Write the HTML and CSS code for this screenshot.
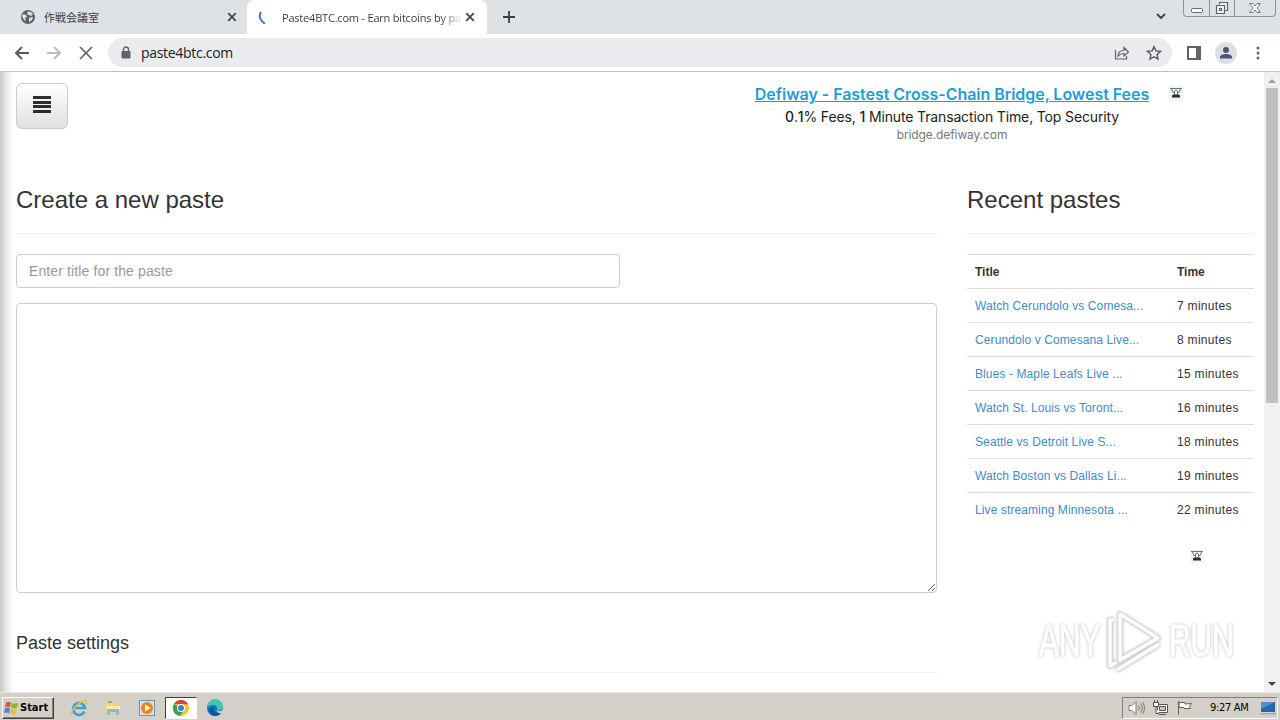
FILE: index.html
```
<!DOCTYPE html>
<html lang="en">
<head>
    <meta charset="UTF-8">
    <meta name="viewport" content="width=device-width, initial-scale=1.0">
    <title>Paste4BTC.com - Earn bitcoins by pasting</title>
    <link rel="stylesheet" href="styles.css">
</head>
<body>
    <div class="tabs">
        <div class="tab">
            <svg class="favicon" width="14" height="14" viewBox="0 0 14 14"><circle cx="7" cy="7" r="7" fill="#5f6368"/><path d="M2 4l3 1 1 2-2 1 1 3-2-1-2-4zM7 1.500l3 .5 2 2-2 2-2-1-2-1zM8 8l3-1 1 1-2 3-2 1z" fill="#dee1e6"/></svg>
            <span class="tab-title cjk">作戦会議室</span>
            <svg class="tab-close" width="10" height="10" viewBox="0 0 10 10"><path d="M1.200 1.200l7.600 7.600M8.800 1.200l-7.600 7.600" stroke="#45484c" stroke-width="1.800"/></svg>
        </div>
        <div class="tab active">
            <svg class="favicon" width="14" height="14" viewBox="0 0 14 14"><path d="M3 2C0.500 6 2 11 7 13.500" fill="none" stroke="#3b6fd0" stroke-width="1.900"/></svg>
            <span class="tab-title">Paste4BTC.com - Earn bitcoins by pa</span>
            <svg class="tab-close" width="10" height="10" viewBox="0 0 10 10"><path d="M1.200 1.200l7.600 7.600M8.800 1.200l-7.600 7.600" stroke="#45484c" stroke-width="1.800"/></svg>
        </div>
        <svg class="new-tab" width="12" height="12" viewBox="0 0 12 12"><path d="M6 0v12M0 6h12" stroke="#3c4043" stroke-width="1.800"/></svg>
        <svg class="tab-search" width="10" height="7" viewBox="0 0 10 7"><path d="M1 1l4 4 4-4" fill="none" stroke="#3c4043" stroke-width="1.800"/></svg>
        <div class="window-buttons">
            <span><svg width="12" height="16" viewBox="0 0 12 16"><rect x=".5" y="8.500" width="11" height="4" rx="1" fill="#fff" stroke="#666b73"/></svg></span>
            <span><svg width="14" height="16" viewBox="0 0 14 16"><path d="M4.500 4.500v-2h8v8h-2M1.500 5.500h8v8h-8zM4.500 8.500h2v2h-2z" fill="#f2f3f5" stroke="#5c6169" stroke-width="1.200"/></svg></span>
            <span><svg width="12" height="16" viewBox="0 0 12 16"><path d="M.5 3.500h3.500l2 2.500 2-2.500h3.500l-3.500 4.500 3.500 4.500h-3.500l-2-2.500-2 2.500H.5L4 8z" fill="#fff" stroke="#777c84"/></svg></span>
        </div>
    </div>

    <div class="toolbar">
        <svg width="16" height="14" viewBox="0 0 16 14"><path d="M15 7H2M8 1L2 7l6 6" fill="none" stroke="#55585c" stroke-width="1.900"/></svg>
        <svg width="16" height="14" viewBox="0 0 16 14"><path d="M1 7h13M8 1l6 6-6 6" fill="none" stroke="#b9bbbe" stroke-width="1.900"/></svg>
        <svg class="stop" width="14" height="14" viewBox="0 0 14 14"><path d="M1 1l12 12M13 1L1 13" stroke="#5f6368" stroke-width="1.700"/></svg>
        <div class="address">
            <svg width="10" height="13" viewBox="0 0 10 13"><path d="M2.500 6V3.500a2.500 2.500 0 0 1 5 0V6" fill="none" stroke="#5f6368" stroke-width="1.400"/><rect x=".5" y="5" width="9" height="7.500" rx="1" fill="#5f6368"/></svg>
            <span class="url">paste4btc.com</span>
            <svg width="16" height="14" viewBox="0 0 16 14"><path d="M1.500 4v9h11v-3M4 10c0-3.500 2-5.500 6-5.500V1.500L14.500 6 10 10V7.500C7 7.500 5.500 8.300 4 10z" fill="none" stroke="#5f6368" stroke-width="1.200"/></svg>
            <svg class="star" width="16" height="16" viewBox="0 0 16 16"><path d="M8 1.700l1.900 4.200 4.600.5-3.400 3.100.9 4.500-4-2.300L4 14l.9-4.500L1.500 6.400l4.600-.5z" fill="none" stroke="#55585c" stroke-width="1.400"/></svg>
        </div>
        <svg class="side-panel" width="14" height="14" viewBox="0 0 14 14"><path d="M1 1h12v12H1z" fill="none" stroke="#5f6368" stroke-width="2"/><path d="M9 1h4v12H9z" fill="#5f6368"/></svg>
        <svg class="profile" width="22" height="22" viewBox="0 0 22 22"><circle cx="11" cy="11" r="11" fill="#dcdfe3"/><circle cx="11" cy="8" r="3" fill="#4a5673"/><path d="M5 16.500v-1.500c0-2 3-3 6-3s6 1 6 3v1.500z" fill="#4a5673"/></svg>
        <svg class="menu-dots" width="4" height="14" viewBox="0 0 4 14" fill="#5f6368"><circle cx="2" cy="2" r="1.500"/><circle cx="2" cy="7" r="1.500"/><circle cx="2" cy="12" r="1.500"/></svg>
    </div>

    <div class="viewport">
        <div class="page">
            <header>
                <button class="menu-button"><svg width="18" height="17" viewBox="0 0 18 17"><path d="M0 1.500h18M0 6.500h18M0 10.500h18M0 15.500h18" stroke="#2e2a30" stroke-width="3"/></svg></button>
                <div class="ad">
                    <a href="#">Defiway - Fastest Cross-Chain Bridge, Lowest Fees</a>
                    <p><b>0</b>.<b>1</b>% Fees, <b>1</b> Minute Transaction Time, Top Security</p>
                    <small>bridge.defiway.com</small>
                </div>
                <svg class="ad-mark" width="14" height="14" viewBox="0 0 14 14"><rect width="14" height="14" fill="#eef3f6"/><path d="M1 2.500h12M2.500 3l1.500 3.500h2M11.500 3L10 6.500H8M5.500 9V5L7 4l1.500 1v4" fill="none" stroke="#6a747b"/><path d="M3 11.500V9.500l1.500-1h5l1.500 1v2z" fill="#242c33"/></svg>
            </header>
            <main>
                <section>
                    <h2>Create a new paste</h2>
                    <input type="text" class="paste-title" placeholder="Enter title for the paste">
                    <textarea class="paste-text"></textarea>
                    <h4>Paste settings</h4>
                </section>
                <aside>
                    <h2>Recent pastes</h2>
                    <table>
                        <tr><th>Title</th><th>Time</th></tr>
                        <tr><td><a href="#">Watch Cerundolo vs Comesa...</a></td><td>7 minutes</td></tr>
                        <tr><td><a href="#">Cerundolo v Comesana Live...</a></td><td>8 minutes</td></tr>
                        <tr><td><a href="#">Blues - Maple Leafs Live ...</a></td><td>15 minutes</td></tr>
                        <tr><td><a href="#">Watch St. Louis vs Toront...</a></td><td>16 minutes</td></tr>
                        <tr><td><a href="#">Seattle vs Detroit Live S...</a></td><td>18 minutes</td></tr>
                        <tr><td><a href="#">Watch Boston vs Dallas Li...</a></td><td>19 minutes</td></tr>
                        <tr><td><a href="#">Live streaming Minnesota ...</a></td><td>22 minutes</td></tr>
                    </table>
                    <svg class="side-mark" width="14" height="14" viewBox="0 0 14 14"><rect width="14" height="14" fill="#f3f6f8"/><path d="M1 2.500h12M2.500 3l1.500 3.500h2M11.500 3L10 6.500H8M5.500 9V5L7 4l1.500 1v4" fill="none" stroke="#6a747b"/><path d="M3 11.500V9.500l1.500-1h5l1.500 1v2z" fill="#242c33"/></svg>
                </aside>
            </main>
        </div>
        <div class="scrollbar">
            <svg width="8" height="4" viewBox="0 0 8 4"><path d="M0 4l4-4 4 4z" fill="#a0a0a0"/></svg>
            <div class="thumb"></div>
            <svg class="down" width="8" height="4" viewBox="0 0 8 4"><path d="M0 0l4 4 4-4z" fill="#444"/></svg>
        </div>
        <div class="watermark">
            <span class="any">ANY</span>
            <svg width="58" height="66" viewBox="0 0 58 66" fill="none" stroke-linejoin="round"><g stroke="#d9d9d9" stroke-width="5.500"><path d="M14 6l38 24-38 22zM8 12H4v46l7-4M11 62l42-26"/></g><g stroke="#fbfbfb" stroke-width="3.500"><path d="M14 6l38 24-38 22zM8 12H4v46l7-4M11 62l42-26"/></g></svg>
            <span class="run">RUN</span>
        </div>
    </div>

    <div class="taskbar">
        <div class="start">
            <svg width="15" height="14" viewBox="0 0 15 14"><path d="M2 1.500q3-1.500 5 .3L6 6.500Q4 5 1 6.200z" fill="#e8582c"/><path d="M8 2q3 1.500 6-.3L13 6.500q-3 1.500-6 0z" fill="#7fb72f"/><path d="M1 7.200q3-1.200 5 .3L5 12.500Q3 11 0 12z" fill="#3c8de0"/><path d="M7 7.800q3 1.500 6-.2l-1 4.700q-3 1.500-6 .4z" fill="#f7bd24"/></svg>
            <span>Start</span>
        </div>
        <div class="task"><svg width="18" height="18" viewBox="0 0 18 18" fill="none"><path d="M14.500 12.500A6 6 0 1 1 15 9H5" stroke="#3b9fe0" stroke-width="2.600"/><path d="M2 16C-1 12 12 0 16 2c1 .5.500 2 0 3" stroke="#f0be37" stroke-width="1.500"/></svg></div>
        <div class="task"><svg width="18" height="18" viewBox="0 0 18 18"><path d="M2 3h6l1 2h7v9H2z" fill="#f1d675"/><path d="M4 2h4v2H4z" fill="#7bbf6a"/><path d="M2 7h14v4H2z" fill="#fbecae"/><path d="M3 10h12v6h-3v-3H6v3H3z" fill="#79bfe6"/></svg></div>
        <div class="task"><svg width="18" height="18" viewBox="0 0 18 18"><rect x="1.500" y="1.500" width="15" height="15" fill="#cfe3f5" stroke="#5d96cc"/><circle cx="9" cy="9" r="6" fill="#ee8418"/><path d="M7 5.500L12.500 9 7 12.500z" fill="#fff"/></svg></div>
        <div class="task current"><svg width="18" height="18" viewBox="0 0 18 18"><circle cx="9" cy="9" r="8" fill="#f9c52e"/><path d="M9 9L2 5a8 8 0 0 0 6 12l4-6z" fill="#35a353"/><path d="M2 5A8 8 0 0 1 16 5.200H9z" fill="#de4436"/><circle cx="9" cy="9" r="4" fill="#fff"/><circle cx="9" cy="9" r="3" fill="#3d7de8"/></svg></div>
        <div class="task"><svg width="18" height="18" viewBox="0 0 18 18"><circle cx="9" cy="9" r="8" fill="#1b74c5"/><path d="M1 8a8 8 0 0 1 16 0c0 4-5 4-6 3 1-3-1-5-4-5-3 0-5 1-6 2z" fill="#41c5b6"/><path d="M8 8c-2 4 2 7 7 6-3 4-9 4-12-1 0-4 2-5 5-5z" fill="#125499"/><path d="M10.500 11.300c2 1.500 5 1 6.300-.6l1 1.300-2 2c-3 .6-5-.7-5.300-2.700z" fill="#d4d0c8"/></svg></div>
        <div class="tray">
            <svg width="17" height="16" viewBox="0 0 17 16" fill="none" stroke="#7c7a76"><path d="M1 5.500h3l4-4v13l-4-4H1z" fill="#fff"/><path d="M10.500 5.500q2 2.500 0 5M12.500 3.500q3.500 4.500 0 9M14.500 2q4 6 0 12"/></svg>
            <svg width="17" height="16" viewBox="0 0 17 16" fill="#fff" stroke="#55534f"><path d="M5.500 4.500h10v8h-10zM7 14.500h7"/><path d="M7.500 6.500h6v4h-6z" fill="#c8c6c1"/><path d="M1.500 2.500h5v4h-5zM2.500 0v2M5.500 0v2M4 7v6.500h3"/></svg>
            <svg width="17" height="16" viewBox="0 0 17 16" fill="#fff" stroke="#65635f"><path d="M2.500 1v14M3 2.500h6v1.500l6.500-.5-2 3 1 2H8v-1H3z"/></svg>
            <span class="clock">9:27 AM</span>
            <svg width="16" height="14" viewBox="0 0 16 14"><path d="M1 1h14v10H1z" fill="#2467b0"/><path d="M1 1h14L1 8z" fill="#4b91d2"/><path d="M0 12h16v1.500H0z" fill="#93acc7"/></svg>
        </div>
    </div>
</body>
</html>
```
FILE: styles.css
```
* {
    box-sizing: border-box;
}
body {
    margin: 0;
    height: 720px;
    display: flex;
    flex-direction: column;
    overflow: hidden;
    background: #fff;
    color: #333;
    font-family: "Liberation Sans", Arial, sans-serif;
}
svg {
    display: block;
    flex: none;
}

/* browser window */
.tabs {
    height: 34px;
    flex: none;
    display: flex;
    align-items: flex-start;
    background: #dee1e6;
    font-family: "Open Sans", Tahoma, sans-serif;
    color: #3c4043;
}
.tab {
    width: 247px;
    height: 34px;
    display: flex;
    align-items: center;
    padding: 0 10px 0 21px;
}
.tab.active {
    width: 240px;
    background: #fff;
    border-radius: 8px 8px 0 0;
    padding: 0 11px 0 11px;
}
.favicon {
    margin-right: 9px;
}
.tab.active .favicon {
    margin-right: 10px;
}
.tab-title {
    flex: 1;
    white-space: nowrap;
    font-size: 11px;
    letter-spacing: -0.2px;
}
.tab.active .tab-title {
    flex: 0 0 178px;
    margin-right: 6px;
    -webkit-mask-image: linear-gradient(to right, #000 158px, transparent 182px);
    mask-image: linear-gradient(to right, #000 158px, transparent 182px);
}
.tab.active .tab-close {
    margin-left: -1px;
}
.tab-title.cjk {
    font-family: "Noto Sans CJK JP", sans-serif;
    letter-spacing: 0;
}
.tab.active .tab-title {
    min-width: 0;
}
.new-tab {
    margin: 11px 0 0 16px;
}
.tab-search {
    margin: 13px 17px 0 auto;
}
.window-buttons {
    display: flex;
    margin-right: 4px;
    height: 17px;
    border: 1px solid #8d9299;
    border-top: 0;
    border-radius: 0 0 4px 4px;
}
.window-buttons span {
    width: 25px;
    display: flex;
    justify-content: center;
}
.window-buttons span:last-child {
    width: 41px;
}
.window-buttons span + span {
    border-left: 1px solid #8d9299;
}
.toolbar {
    height: 38px;
    flex: none;
    display: flex;
    align-items: center;
    gap: 16px;
    padding: 0 20px 0 14px;
    border-bottom: 1px solid #c4c4c4;
}
.stop {
    margin-left: 1px;
}
.address {
    flex: 1;
    height: 29px;
    margin-left: -1px;
    padding: 0 10px 0 13px;
    display: flex;
    align-items: center;
    border-radius: 15px;
    background: #e9ebee;
}
.url {
    flex: 1;
    margin-left: 10px;
    font-family: "Open Sans", Tahoma, sans-serif;
    font-size: 14px;
    letter-spacing: -0.3px;
    color: #202124;
}
.star {
    margin-left: 16px;
}
.side-panel {
    margin-left: -1px;
}
.profile {
    margin-left: -2px;
}
.menu-dots {
    margin-left: 3px;
}

/* page */
.viewport {
    flex: 1;
    min-height: 0;
    display: flex;
    position: relative;
    overflow: hidden;
}
.page {
    flex: 1;
    padding: 11px 10px 0 16px;
    background: linear-gradient(to right, #c8c8c8 0, #e6e6e6 6px, #fff 13px);
}
header {
    height: 103px;
    display: flex;
}
.menu-button {
    width: 52px;
    height: 46px;
    display: flex;
    align-items: center;
    justify-content: center;
    padding: 0 0 3px;
    border: 1px solid #ccc;
    border-radius: 6px;
    background: linear-gradient(#fff, #e0e0e0);
}
.ad {
    width: 396px;
    margin: -1px 0 0 686px;
    text-align: center;
    white-space: nowrap;
    font-family: Inter, sans-serif;
    color: #222;
}
.ad a {
    display: block;
    font-size: 16px;
    font-weight: 600;
    line-height: 24px;
    letter-spacing: -0.04px;
    color: #1a9fd4;
    text-decoration: underline;
}
.ad p {
    margin: 0;
    font-size: 14px;
    line-height: 21px;
    letter-spacing: -0.14px;
}
.ad b {
    font-weight: 500;
}
.ad small {
    display: block;
    font-size: 12px;
    line-height: 15px;
    letter-spacing: -0.1px;
    color: #777;
}
.ad-mark {
    margin: 3px 0 0 19px;
}
main {
    display: grid;
    grid-template-columns: 921px 287px;
    column-gap: 30px;
}
h2 {
    margin: 0 0 20px;
    padding-bottom: 20px;
    border-bottom: 1px solid #eee;
    font-size: 24px;
    line-height: 27px;
    font-weight: normal;
}
.paste-title {
    display: block;
    width: 604px;
    height: 34px;
    padding: 6px 12px;
    border: 1px solid #ccc;
    border-radius: 4px;
    font-family: inherit;
    font-size: 14px;
    letter-spacing: 0.12px;
}
.paste-title::placeholder {
    color: #999;
}
.paste-text {
    display: block;
    width: 921px;
    height: 290px;
    margin-top: 15px;
    border: 1px solid #ccc;
    border-radius: 4px;
}
h4 {
    margin: 40px 0 0;
    padding-bottom: 19px;
    border-bottom: 1px solid #eee;
    font-size: 18px;
    line-height: 20px;
    font-weight: normal;
}
table {
    width: 287px;
    border-collapse: separate;
    border-spacing: 0;
    table-layout: fixed;
    font-size: 12px;
    letter-spacing: 0.1px;
}
th, td {
    height: 34px;
    padding: 0 8px;
    border-top: 1px solid #ddd;
    text-align: left;
    white-space: nowrap;
}
th {
    letter-spacing: 0;
}
th:first-child {
    width: 202px;
}
td:last-child {
    letter-spacing: 0.3px;
}
td a {
    color: #428bca;
    text-decoration: none;
}
.side-mark {
    margin: 23px 0 0 223px;
}
.scrollbar {
    width: 16px;
    display: flex;
    flex-direction: column;
    align-items: center;
    padding: 7px 0 6px;
    background: #f1f1f1;
}
.thumb {
    width: 12px;
    height: 315px;
    margin-top: 5px;
    background: #c1c1c1;
}
.down {
    margin-top: auto;
}

/* floats over the page */
.watermark {
    position: absolute;
    left: 1039px;
    top: 536px;
    display: flex;
    align-items: center;
    color: #fff;
    font-family: "Liberation Sans", sans-serif;
    font-size: 44px;
    filter: drop-shadow(0 0 1.5px #bbb);
}
.watermark span {
    width: 63px;
    transform: scaleX(0.68);
    transform-origin: left;
    -webkit-text-stroke: 1px #fff;
}
.watermark svg {
    margin: 0 5px 0 4px;
}

/* taskbar */
.taskbar {
    height: 28px;
    flex: none;
    display: flex;
    align-items: center;
    padding: 2px 2px 0;
    border-top: 1px solid #e8e5df;
    background: #d4d0c8;
}
.start {
    width: 52px;
    height: 22px;
    display: flex;
    align-items: center;
    gap: 1px;
    margin-right: 9px;
    padding-left: 1px;
    border: 1px solid #fff;
    border-right-color: #404040;
    border-bottom-color: #404040;
    box-shadow: inset -1px -1px #808080;
    font-family: "DejaVu Sans Condensed", "DejaVu Sans", sans-serif;
    font-size: 11px;
    font-weight: bold;
    color: #000;
}
.task {
    width: 32px;
    height: 22px;
    margin-right: 2px;
    display: flex;
    align-items: center;
    justify-content: center;
}
.task.current {
    border: 1px solid #404040;
    border-right-color: #fff;
    border-bottom-color: #fff;
    background: #fff;
}
.tray {
    height: 22px;
    margin-left: auto;
    padding: 0 1px 0 5px;
    display: flex;
    align-items: center;
    gap: 7px;
    border: 1px solid #808080;
    border-right-color: #fff;
    border-bottom-color: #fff;
}
.clock {
    width: 41px;
    margin: 0 2px 0 10px;
    white-space: nowrap;
    font-family: "DejaVu Sans Condensed", "DejaVu Sans", sans-serif;
    font-size: 11px;
    letter-spacing: -0.3px;
    color: #000;
}
```
